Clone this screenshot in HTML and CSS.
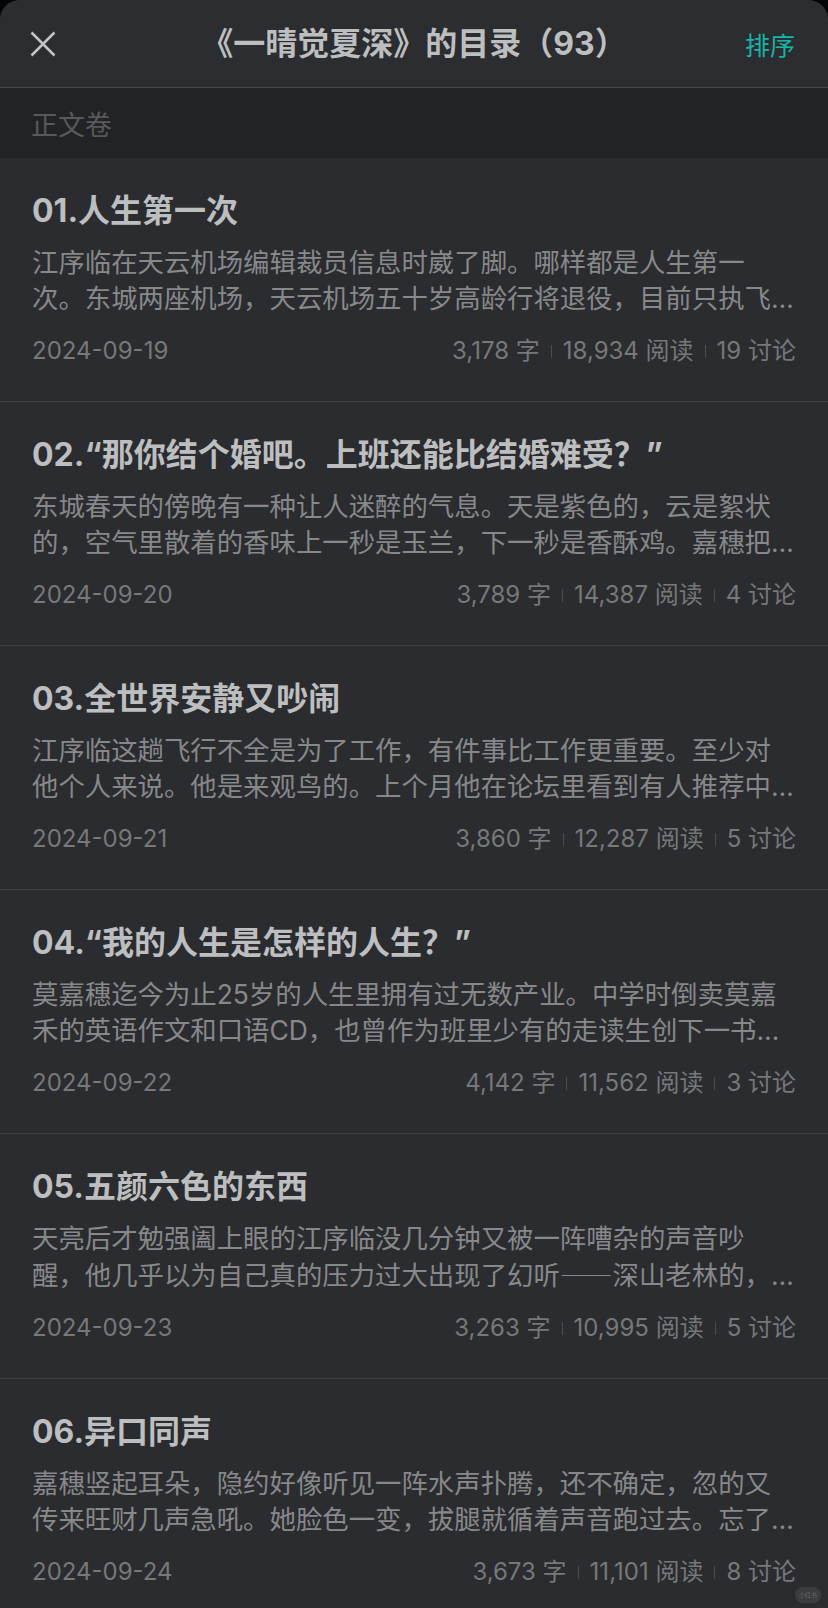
FILE: index.html
```html
<!DOCTYPE html>
<html lang="zh-CN">
<head>
<meta charset="utf-8">
<title>《一晴觉夏深》的目录</title>
<link rel="stylesheet" href="styles.css">
</head>
<body>
<div class="sheet">
  <header class="topbar">
    <button class="close" aria-label="关闭">
      <svg viewBox="0 0 26 26" width="26" height="26"><path d="M1.5 1.5 L24.5 24.5 M24.5 1.5 L1.5 24.5" stroke="#c4c4c4" stroke-width="2.5" fill="none"/></svg>
    </button>
    <h1 class="title">《一晴觉夏深》的目录（93）</h1>
    <span class="sort">排序</span>
  </header>
  <div class="volume">正文卷</div>
  <ul class="chapters">
    <li class="chapter">
      <h2 class="ch-title">01.人生第一次</h2>
      <p class="ch-desc">江序临在天云机场编辑裁员信息时崴了脚。哪样都是人生第一次。东城两座机场，天云机场五十岁高龄行将退役，目前只执飞国内航线，而新机场</p>
      <div class="meta"><span>2024-09-19</span><span class="stats"><span>3,178 字</span><i class="sep"></i><span>18,934 阅读</span><i class="sep"></i><span>19 讨论</span></span></div>
    </li>
    <li class="chapter">
      <h2 class="ch-title">02.“那你结个婚吧。上班还能比结婚难受？”</h2>
      <p class="ch-desc">东城春天的傍晚有一种让人迷醉的气息。天是紫色的，云是絮状的，空气里散着的香味上一秒是玉兰，下一秒是香酥鸡。嘉穗把车停在路边</p>
      <div class="meta"><span>2024-09-20</span><span class="stats"><span>3,789 字</span><i class="sep"></i><span>14,387 阅读</span><i class="sep"></i><span>4 讨论</span></span></div>
    </li>
    <li class="chapter">
      <h2 class="ch-title">03.全世界安静又吵闹</h2>
      <p class="ch-desc">江序临这趟飞行不全是为了工作，有件事比工作更重要。至少对他个人来说。他是来观鸟的。上个月他在论坛里看到有人推荐中部山区</p>
      <div class="meta"><span>2024-09-21</span><span class="stats"><span>3,860 字</span><i class="sep"></i><span>12,287 阅读</span><i class="sep"></i><span>5 讨论</span></span></div>
    </li>
    <li class="chapter">
      <h2 class="ch-title">04.“我的人生是怎样的人生？”</h2>
      <p class="ch-desc">莫嘉穗迄今为止25岁的人生里拥有过无数产业。中学时倒卖莫嘉禾的英语作文和口语CD，也曾作为班里少有的走读生创下一书包零食</p>
      <div class="meta"><span>2024-09-22</span><span class="stats"><span>4,142 字</span><i class="sep"></i><span>11,562 阅读</span><i class="sep"></i><span>3 讨论</span></span></div>
    </li>
    <li class="chapter">
      <h2 class="ch-title">05.五颜六色的东西</h2>
      <p class="ch-desc">天亮后才勉强阖上眼的江序临没几分钟又被一阵嘈杂的声音吵醒，他几乎以为自己真的压力过大出现了幻听<span class="cjk">——</span>深山老林的，哪来的声响</p>
      <div class="meta"><span>2024-09-23</span><span class="stats"><span>3,263 字</span><i class="sep"></i><span>10,995 阅读</span><i class="sep"></i><span>5 讨论</span></span></div>
    </li>
    <li class="chapter">
      <h2 class="ch-title">06.异口同声</h2>
      <p class="ch-desc">嘉穗竖起耳朵，隐约好像听见一阵水声扑腾，还不确定，忽的又传来旺财几声急吼。她脸色一变，拔腿就循着声音跑过去。忘了身后还有人</p>
      <div class="meta"><span>2024-09-24</span><span class="stats"><span>3,673 字</span><i class="sep"></i><span>11,101 阅读</span><i class="sep"></i><span>8 讨论</span></span></div>
    </li>
  </ul>
  <div class="watermark">小红书</div>
</div>
</body>
</html>
```

FILE: styles.css
```css
html, body {
  margin: 0;
  padding: 0;
  background: #050505;
  height: 1608px;
  overflow: hidden;
}

body {
  font-family: "Inter", "Noto Sans CJK SC", sans-serif;
}

.sheet {
  position: relative;
  background: #2a2c2f;
  border-radius: 20px 20px 0 0;
  overflow: hidden;
  min-height: 1608px;
}

.topbar {
  display: grid;
  grid-template-columns: 1fr auto 1fr;
  align-items: center;
  height: 87px;
  border-bottom: 1px solid #48494c;
  background: #2b2d30;
}

.close {
  justify-self: start;
  margin-left: 30px;
  padding: 0;
  border: 0;
  background: none;
  width: 26px;
  height: 26px;
  display: flex;
}

.title {
  margin: 0;
  font-size: 32px;
  font-weight: 700;
  color: #bdbebf;
  line-height: 44px;
  white-space: nowrap;
}

.sort {
  justify-self: end;
  padding-right: 33px;
  font-size: 25px;
  color: #18b4a5;
}

.volume {
  height: 70px;
  display: flex;
  align-items: center;
  padding-left: 31px;
  background: #222326;
  font-size: 27px;
  color: #58595b;
}

.chapters {
  list-style: none;
  margin: 0;
  padding: 0;
}

.chapter {
  padding: 31px 32px 33px;
  border-bottom: 1px solid #3d3f42;
}

.ch-title {
  margin: 0;
  font-size: 32px;
  font-weight: 700;
  line-height: 44px;
  color: #bdbebf;
  white-space: nowrap;
}

.ch-desc {
  margin: 11px 0 0;
  font-size: 26.4px;
  line-height: 36px;
  color: #87888a;
  display: -webkit-box;
  -webkit-box-orient: vertical;
  -webkit-line-clamp: 2;
  overflow: hidden;
}

.cjk {
  font-family: "Noto Sans CJK SC", sans-serif;
}

.meta {
  margin-top: 18px;
  display: flex;
  justify-content: space-between;
  align-items: center;
  font-size: 24px;
  line-height: 34px;
  color: #76787a;
}

.stats {
  display: flex;
  align-items: center;
}

.sep {
  display: block;
  width: 1px;
  height: 13px;
  margin: 0 11px;
  background: #4a4c4f;
}

.watermark {
  position: fixed;
  right: 7px;
  top: 1587px;
  width: 26px;
  height: 16px;
  border-radius: 8px;
  background: rgba(255, 255, 255, 0.08);
  color: rgba(255, 255, 255, 0.22);
  font-size: 6px;
  line-height: 16px;
  text-align: center;
}
```
